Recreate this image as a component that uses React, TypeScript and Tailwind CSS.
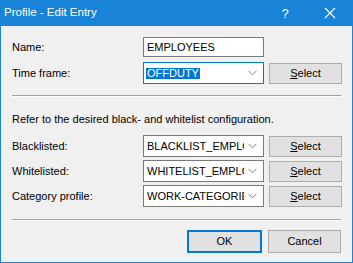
import React from "react";

const font = { fontFamily: '"Segoe UI", "Liberation Sans", Arial, sans-serif' };

function Chevron() {
  return (
    <svg width="9" height="6" viewBox="0 0 9 6" className="shrink-0">
      <path d="M0.5 0.8 L4.5 4.8 L8.5 0.8" fill="none" stroke="#808080" strokeWidth="1" />
    </svg>
  );
}

function Combo({ value, selected }: { value: string; selected?: boolean }) {
  return (
    <div
      className={
        "flex items-center w-[121px] h-[22px] bg-white border pl-[2px] pr-[6px] " +
        (selected ? "border-[#0078d7]" : "border-[#7a7a7a]")
      }
    >
      <div className="w-[98px] overflow-hidden whitespace-nowrap">
        <span className={selected ? "bg-[#0078d7] text-white px-[1px]" : "px-[1px]"}>{value}</span>
      </div>
      <div className="flex-1" />
      <Chevron />
    </div>
  );
}

function SelectBtn() {
  return (
    <div className="w-[73px] h-[21px] ml-[5px] flex items-center justify-center bg-[#e1e1e1] border border-[#adadad]">
      <span>
        <span className="underline">S</span>elect
      </span>
    </div>
  );
}

function Row({ label, children }: { label: string; children: React.ReactNode }) {
  return (
    <div className="flex items-center">
      <div className="w-[131px]">{label}</div>
      {children}
    </div>
  );
}

export default function App() {
  return (
    <div
      className="w-[353px] h-[263px] flex flex-col bg-[#f0f0f0] border-x border-b border-[#1883d7] text-[11px] text-black leading-none"
      style={font}
    >
      {/* Title bar */}
      <div className="h-[26px] -mx-px bg-[#1883d7] text-white flex items-center pl-[4px] text-[11.5px]">
        <span className="flex-1">Profile - Edit Entry</span>
        <span className="w-[14px] text-center mr-[32px] text-[13px]">?</span>
        <svg width="12" height="12" viewBox="0 0 12 12" className="mr-[17px]">
          <path d="M1 1 L11 11 M11 1 L1 11" stroke="white" strokeWidth="1.2" />
        </svg>
      </div>

      <div className="flex flex-col pl-[11px] pr-[10px]">
        <div className="mt-[11px]">
          <Row label="Name:">
            <div className="w-[121px] h-[20px] bg-white border border-[#7a7a7a] flex items-center pl-[3px]">
              EMPLOYEES
            </div>
          </Row>
        </div>
        <div className="mt-[5px]">
          <Row label="Time frame:">
            <Combo value="OFFDUTY" selected />
            <SelectBtn />
          </Row>
        </div>

        <div className="mt-[11px] h-[2px] border-t border-[#a0a0a0] border-b border-b-white mr-[1px]" />

        <div className="mt-[17px]">Refer to the desired black- and whitelist configuration.</div>

        <div className="mt-[10px] flex flex-col gap-[3px]">
          <Row label="Blacklisted:">
            <Combo value="BLACKLIST_EMPLOYEES" />
            <SelectBtn />
          </Row>
          <Row label="Whitelisted:">
            <Combo value="WHITELIST_EMPLOYEES" />
            <SelectBtn />
          </Row>
          <Row label="Category profile:">
            <Combo value="WORK-CATEGORIES" />
            <SelectBtn />
          </Row>
        </div>

        <div className="mt-[12px] h-[2px] border-t border-[#a0a0a0] border-b border-b-white mr-[1px]" />

        <div className="mt-[9px] flex justify-end gap-[6px] mr-[1px]">
          <div className="w-[75px] h-[23px] flex items-center justify-center bg-[#e1e1e1] border-2 border-[#0078d7]">
            OK
          </div>
          <div className="w-[73px] h-[23px] flex items-center justify-center bg-[#e1e1e1] border border-[#adadad]">
            Cancel
          </div>
        </div>
      </div>
    </div>
  );
}
